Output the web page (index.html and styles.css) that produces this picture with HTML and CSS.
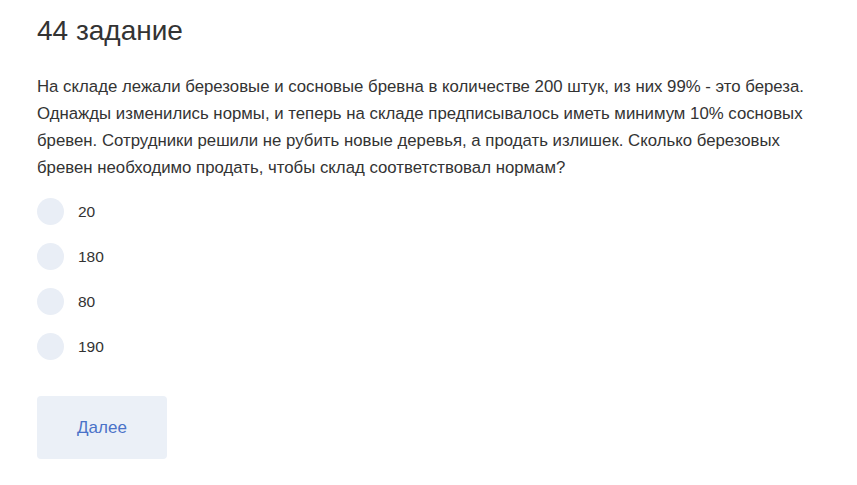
FILE: index.html
```html
<!DOCTYPE html>
<html lang="ru">
<head>
<meta charset="utf-8">
<link rel="stylesheet" href="styles.css">
</head>
<body>
<main class="task">
  <h1 class="task-title">44 задание</h1>
  <p class="task-text">На складе лежали березовые и сосновые бревна в количестве 200 штук, из них 99% - это береза. Однажды изменились нормы, и теперь на складе предписывалось иметь минимум 10% сосновых бревен. Сотрудники решили не рубить новые деревья, а продать излишек. Сколько березовых бревен необходимо продать, чтобы склад соответствовал нормам?</p>
  <ul class="options">
    <li class="option"><span class="radio"></span><span class="label">20</span></li>
    <li class="option"><span class="radio"></span><span class="label">180</span></li>
    <li class="option"><span class="radio"></span><span class="label">80</span></li>
    <li class="option"><span class="radio"></span><span class="label">190</span></li>
  </ul>
  <button class="next">Далее</button>
</main>
</body>
</html>
```
FILE: styles.css
```css
html, body { margin: 0; padding: 0; background: #fff; }
body { font-family: "Liberation Sans", Arial, sans-serif; color: #333; }
.task { padding: 14px 0 0 37px; width: 792px; }
.task-title { margin: 0; font-size: 28px; font-weight: 400; line-height: 34px; color: #333; }
.task-text { margin: 25px 0 0; font-size: 16.8px; line-height: 27px; color: #333; }
.options { list-style: none; margin: 17px 0 0; padding: 0; display: flex; flex-direction: column; gap: 18px; }
.option { display: flex; align-items: center; gap: 14px; height: 27px; }
.radio { width: 27px; height: 27px; border-radius: 50%; background: #e9eef6; flex: none; }
.label { font-size: 15.5px; color: #333; }
.next { margin-top: 36px; width: 130px; height: 63px; border: 0; border-radius: 4px; background: #ebf0f7; color: #4a72c8; font-family: "Liberation Sans", Arial, sans-serif; font-size: 17px; cursor: pointer; }
```
